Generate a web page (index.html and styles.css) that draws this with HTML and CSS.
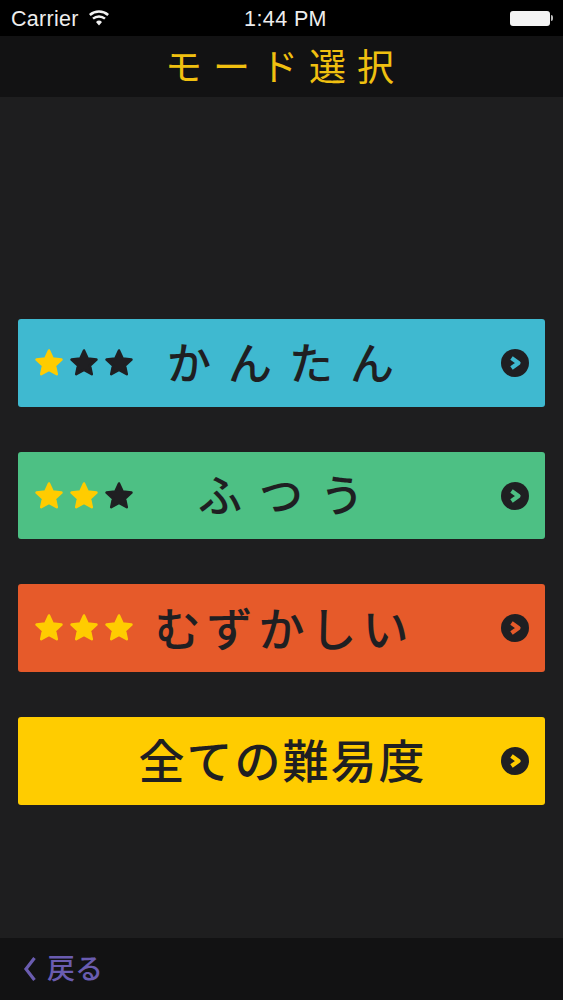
FILE: index.html
```html
<!DOCTYPE html>
<html lang="ja">
<head>
<meta charset="utf-8">
<title>モード選択</title>
<link rel="stylesheet" href="styles.css">
</head>
<body>
<svg class="defs" width="0" height="0" aria-hidden="true">
  <defs>
    <symbol id="star" viewBox="0 0 30 30">
      <path d="M15 2.500l3.700 8 8.800 1-6.500 6 1.800 8.700L15 21.800l-7.800 4.400L9 17.500l-6.500-6 8.800-1z" fill="currentColor" stroke="currentColor" stroke-width="2.500" stroke-linejoin="round"/>
    </symbol>
    <symbol id="go" viewBox="0 0 28 28">
      <circle cx="14" cy="14" r="14" fill="#1f1f22"/>
      <path d="M10.500 9l7 5-7 5" fill="none" stroke="currentColor" stroke-width="4.200" stroke-linejoin="round"/>
    </symbol>
  </defs>
</svg>
<div class="status">
  <div class="status-left">
    <span class="carrier">Carrier</span>
    <svg class="wifi" viewBox="0 0 22 16"><path d="M11 15.500l-3-3.600a4.600 4.600 0 0 1 6 0zM5.800 9.600L4.200 7.700a10.400 10.400 0 0 1 13.600 0l-1.600 1.900a8 8 0 0 0-10.400 0zM2.700 5.900L1 4a15.200 15.200 0 0 1 20 0l-1.700 1.900a12.700 12.700 0 0 0-16.600 0z" fill="#f2f2f2"/></svg>
  </div>
  <div class="status-time">1:44 PM</div>
  <div class="battery"><span class="battery-body"></span><span class="battery-tip"></span></div>
</div>
<header class="header"><h1 class="title">モード選択</h1></header>
<main class="main">
  <a class="mode mode-easy">
    <span class="stars">
      <svg class="star on"><use href="#star"/></svg>
      <svg class="star"><use href="#star"/></svg>
      <svg class="star"><use href="#star"/></svg>
    </span>
    <span class="label label-easy">かんたん</span>
    <svg class="go"><use href="#go"/></svg>
  </a>
  <a class="mode mode-normal">
    <span class="stars">
      <svg class="star on"><use href="#star"/></svg>
      <svg class="star on"><use href="#star"/></svg>
      <svg class="star"><use href="#star"/></svg>
    </span>
    <span class="label label-normal">ふつう</span>
    <svg class="go"><use href="#go"/></svg>
  </a>
  <a class="mode mode-hard">
    <span class="stars">
      <svg class="star on"><use href="#star"/></svg>
      <svg class="star on"><use href="#star"/></svg>
      <svg class="star on"><use href="#star"/></svg>
    </span>
    <span class="label label-hard">むずかしい</span>
    <svg class="go"><use href="#go"/></svg>
  </a>
  <a class="mode mode-all">
    <span class="label label-all">全ての難易度</span>
    <svg class="go"><use href="#go"/></svg>
  </a>
</main>
<footer class="footer">
  <svg class="back-chev" viewBox="0 0 14 26"><path d="M11.500 2L3 13l8.500 11" fill="none" stroke="#6a5cb0" stroke-width="3.200"/></svg>
  <span class="back-text">戻る</span>
</footer>
</body>
</html>
```
FILE: styles.css
```css
* { box-sizing: border-box; }
html, body { margin: 0; padding: 0; }
body {
  width: 563px;
  height: 1000px;
  display: flex;
  flex-direction: column;
  background: #1e1e1f;
  font-family: "Noto Sans CJK JP", "Noto Sans", sans-serif;
  overflow: hidden;
}
.defs { position: absolute; }
.status {
  height: 36px;
  flex: none;
  background: #000;
  color: #eee;
  display: grid;
  grid-template-columns: 1fr auto 1fr;
  align-items: center;
  padding: 2px 10px 0 11px;
  font-family: "Liberation Sans", Arial, sans-serif;
  font-size: 21.500px;
}
.status-left { display: flex; align-items: center; gap: 9px; }
.carrier { letter-spacing: 0.300px; }
.wifi { width: 22px; height: 16px; margin-top: -3px; }
.status-time { font-size: 21.500px; margin-left: 7px; letter-spacing: 0.400px; }
.battery { justify-self: end; display: flex; align-items: center; gap: 1px; margin-top: -2px; }
.battery-body { width: 40px; height: 15px; background: #f4f4f4; border-radius: 3px; }
.battery-tip { width: 2px; height: 6px; background: #bbb; border-radius: 0 2px 2px 0; }
.header {
  height: 61px;
  flex: none;
  background: #121213;
  display: flex;
  align-items: center;
  justify-content: center;
}
.title {
  margin: -3px -7px 0 0;
  color: #f0c010;
  font-size: 37px;
  font-weight: 400;
  letter-spacing: 11px;
  line-height: 1;
}
.main {
  flex: 1;
  padding: 222px 18px 0;
  display: flex;
  flex-direction: column;
  gap: 45px;
}
.mode {
  position: relative;
  height: 87.670px;
  border-radius: 3px;
  display: flex;
  align-items: center;
  justify-content: center;
  color: #1f1f22;
}
.mode-easy { background: #3fb9d0; }
.mode-normal { background: #4dc084; }
.mode-hard { background: #e65a2a; }
.mode-all { background: #ffcc00; }
.mode-easy .go { color: #3fb9d0; }
.mode-normal .go { color: #4dc084; }
.mode-hard .go { color: #e65a2a; }
.mode-all .go { color: #ffcc00; }
.stars {
  position: absolute;
  left: 16px;
  top: 29px;
  display: flex;
  gap: 5px;
}
.star { width: 30px; height: 30px; color: #1f1f22; }
.star.on { color: #ffcc00; }
.go {
  position: absolute;
  right: 16px;
  top: 30px;
  width: 28px;
  height: 28px;
}
.label {
  font-size: 44px;
  line-height: 1;
  font-weight: 500;
  white-space: nowrap;
  margin-top: -4px;
}
.label-easy { letter-spacing: 17px; margin-right: -17px; margin-left: -2px; }
.label-normal { letter-spacing: 17px; margin-right: -17px; margin-left: -1px; }
.label-hard { font-size: 46px; letter-spacing: 6px; margin-right: -6px; }
.label-all { font-size: 46px; letter-spacing: 2px; margin-right: -2px; margin-top: -6px; }
.footer {
  height: 62px;
  flex: none;
  background: #121213;
  display: flex;
  align-items: center;
  gap: 10px;
  padding: 0 0 0 23px;
}
.back-chev { width: 14px; height: 26px; margin-top: -1px; }
.back-text { color: #6a5cb0; font-size: 28px; line-height: 1; margin-top: -5px; font-weight: 500; }
```
